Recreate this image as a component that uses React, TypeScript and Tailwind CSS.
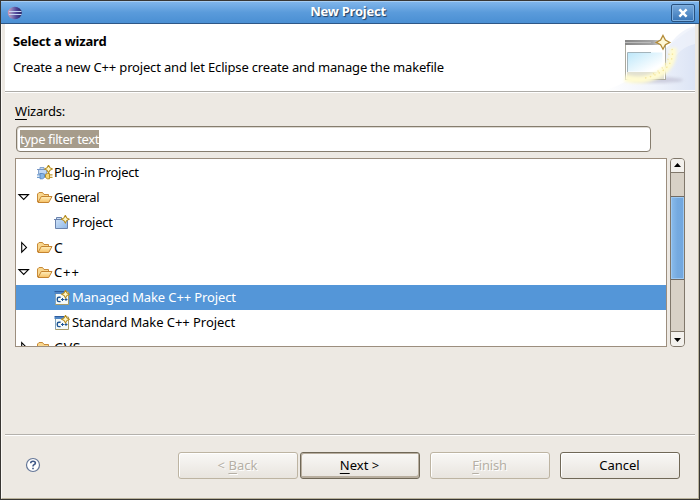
import React from 'react';

const Star = ({ x, y, s = 1 }: { x: number; y: number; s?: number }) => (
  <g transform={`translate(${x} ${y}) scale(${s})`}>
    <path d="M0 -4.2 L1.5 -1.5 L4.2 0 L1.5 1.5 L0 4.2 L-1.5 1.5 L-4.2 0 L-1.5 -1.5Z" fill="#fff6c4" stroke="#b58a1c" strokeWidth="1.1" />
  </g>
);

const Folder = () => (
  <svg width="16" height="16" viewBox="0 0 16 16" className="shrink-0">
    <defs>
      <linearGradient id="fo" x1="0" y1="0" x2="0" y2="1">
        <stop offset="0" stopColor="#fff0c0" />
        <stop offset="1" stopColor="#f5bf62" />
      </linearGradient>
    </defs>
    <path d="M0.5 12 V4 L2 2.5 H5.5 L7 4.5 H11.5 V7" fill="#f9d78e" stroke="#c88a38" />
    <path d="M1 12.5 L4.3 6.5 H15 L11.7 12.5Z" fill="url(#fo)" stroke="#c58430" strokeLinejoin="round" />
  </svg>
);

const ProjectIcon = () => (
  <svg width="16" height="16" viewBox="0 0 16 16" className="shrink-0">
    <defs>
      <linearGradient id="pr" x1="0" y1="0" x2="1" y2="1">
        <stop offset="0" stopColor="#d4e5f8" />
        <stop offset="1" stopColor="#8db6e6" />
      </linearGradient>
    </defs>
    <path d="M1.5 13.5 V4.5 H2.5 V2.5 H7.5 V4.5 H13.5 V13.5Z" fill="url(#pr)" stroke="#6b83ad" />
    <path d="M0 4.5 H9" stroke="#6b83ad" />
    <Star x={11.3} y={4.2} s={0.92} />
  </svg>
);

const CppIcon = () => (
  <svg width="16" height="16" viewBox="0 0 16 16" className="shrink-0">
    <path d="M1.5 2 H14.5 V14.5 H1.5Z" fill="#f5faf9" stroke="#a69b69" />
    <path d="M0.5 2 H10 V4 H0.5Z" fill="#4f86c5" />
    <path d="M0.5 1.5 H10" stroke="#2f5e9f" />
    <path d="M1.5 4.5 V14" stroke="#81a3bd" />
    <path d="M6.6 7.2 H4.9 Q3.3 7.2 3.3 8.7 V10 Q3.3 11.6 4.9 11.6 H6.6" fill="none" stroke="#1f5695" strokeWidth="1.4" />
    <path d="M7 9.5 H10 M8.5 8 V11 M10.5 9.5 H13.5 M12 8 V11" stroke="#1f5695" strokeWidth="1" />
    <Star x={11.5} y={4.2} s={0.92} />
  </svg>
);

const PluginIcon = () => (
  <svg width="16" height="16" viewBox="0 0 16 16" className="shrink-0">
    <path d="M1.5 9 V4.5 H3 V2.5 H7 V4.5 H9.5 V9Z" fill="#c0d8f3" stroke="#86a4cd" />
    <path d="M0 4.5 H8" stroke="#7595c5" />
    <path d="M3 8.5 H5.5 L7.5 9.5 V12.5 L5.5 13.8 H3Z" fill="#85b6e7" stroke="#5685bd" strokeWidth=".9" />
    <path d="M0 9.8 H3 M0 12.3 H3" stroke="#6f9dd0" strokeWidth="1.2" />
    <path d="M8.5 9.5 L10.5 8.5 H12.5 V13.8 H10.5 L8.5 12.5Z" fill="#f6d774" stroke="#b18d25" />
    <path d="M12.5 9.8 H15.5 M12.5 12.3 H15.5" stroke="#c39c34" strokeWidth="1.2" />
    <Star x={11.5} y={4} s={0.92} />
  </svg>
);

const Arrow = ({ open }: { open: boolean }) => (
  <svg width="13" height="13" viewBox="0 0 13 13" className="shrink-0">
    {open ? (
      <path d="M1.9 3.6 H11.5 L6.7 8.4Z" fill="#fff" stroke="#000" strokeWidth="1.1" />
    ) : (
      <path d="M4.7 1.6 L9.5 6.4 L4.7 11.2Z" fill="#fff" stroke="#000" strokeWidth="1.1" />
    )}
  </svg>
);

const Row = ({ icon, children, arrow, deep, selected, text }: {
  icon: React.ReactNode; children: React.ReactNode; arrow?: 'open' | 'closed'; deep?: boolean; selected?: boolean; text?: string;
}) => (
  <div className={`flex h-[25px] shrink-0 items-center ${deep ? 'pl-[38px]' : 'pl-px'} ${selected ? 'bg-[#5496d8] text-white' : ''}`}>
    {!deep && <div className="flex w-5 shrink-0">{arrow && <Arrow open={arrow === 'open'} />}</div>}
    {icon}
    <span className={`whitespace-nowrap ${deep ? 'ml-[2px]' : 'ml-px'} ${text ?? ''}`}>{children}</span>
  </div>
);

const Key = ({ children }: { children: React.ReactNode }) => (
  <span className="underline decoration-1 underline-offset-[3px]">{children}</span>
);

const Button = ({ children, disabled, primary, className = '' }: {
  children: React.ReactNode; disabled?: boolean; primary?: boolean; className?: string;
}) => (
  <button
    className={`h-[27px] w-[120px] rounded-[3px] border bg-linear-to-b from-[#f9f8f6] to-[#e8e4de] pr-px text-center leading-[25px] ${
      disabled ? 'border-[#bdb4a2] text-[#b5afa5] [text-shadow:1px_1px_0_#fff]' : 'border-[#706857] text-black'
    } ${primary ? 'shadow-[inset_1px_1px_0_#b8ae9f,inset_-1px_-2px_0_#b8ae9f]' : 'shadow-[inset_1px_1px_0_#ffffff]'} ${className}`}
  >
    {children}
  </button>
);

const WizardBanner = () => (
  <svg width="110" height="66" viewBox="0 0 110 66" className="shrink-0">
    <defs>
      <linearGradient id="sw" x1="0" y1="0" x2="1" y2="0">
        <stop offset="0" stopColor="#ffffff" />
        <stop offset=".55" stopColor="#eff3fb" />
        <stop offset="1" stopColor="#dce4f5" />
      </linearGradient>
      <linearGradient id="sk" x1="0" y1="0" x2="1" y2="1">
        <stop offset="0" stopColor="#bce7fa" />
        <stop offset=".8" stopColor="#fff" />
      </linearGradient>
      <linearGradient id="tb" x1="0" y1="0" x2="1" y2="0">
        <stop offset="0" stopColor="#858585" />
        <stop offset=".7" stopColor="#a5a5a5" />
        <stop offset="1" stopColor="#e5e5e5" />
      </linearGradient>
      <filter id="soft" x="-30%" y="-30%" width="160%" height="160%"><feGaussianBlur stdDeviation="1.8" /></filter>
    </defs>
    <path d="M20 66 C60 55 75 22 110 3 V66Z" fill="url(#sw)" />
    <path d="M82 25 C90 12 98 5 110 2 V20 C100 22 93 28 86 38Z" fill="#edf1fa" opacity=".8" />
    <ellipse cx="72" cy="56" rx="26" ry="3" fill="#b9b8cc" opacity=".6" filter="url(#soft)" />
    <rect x="40.5" y="16.5" width="40" height="39" fill="#fff" stroke="#aaa99e" />
    <rect x="40" y="16" width="39" height="5" fill="url(#tb)" />
    <path d="M40 18.5 H66" stroke="#bbb" />
    <rect x="42.5" y="28.5" width="35" height="19" fill="url(#sk)" />
    <path d="M42.5 48 V28.5 H66" fill="none" stroke="#a3b4bb" />
    <rect x="42" y="48" width="37" height="7" fill="#e2e1d1" />
    <path d="M40 54 C62 60 90 49 88 24" fill="none" stroke="#fffbd2" strokeWidth="7" filter="url(#soft)" />
    <path d="M60 54 C78 50 90 40 87 25" fill="none" stroke="#f4e59c" strokeWidth="1.4" strokeDasharray="1.4 3.4" />
    <path d="M68 50 C78 45 84 38 84 29" fill="none" stroke="#f3e6a6" strokeWidth="1.4" strokeDasharray="1.2 4" />
    <path d="M78 11.5 L80.4 16 L84.8 18.4 L80.4 20.8 L78 25.2 L75.6 20.8 L71.2 18.4 L75.6 16Z" fill="#fff8d7" stroke="#b28a35" strokeWidth="1.3" />
  </svg>
);

export default function App() {
  return (
    <div className="flex h-[500px] w-[700px] flex-col overflow-hidden border border-[#383633] bg-[#ede9e3] font-['Noto_Sans',sans-serif] text-[13px] text-black">
      <div className="flex h-[23px] shrink-0 items-center border-t border-b border-t-[#a7cdf2] border-b-[#2e5786] bg-linear-to-b from-[#7fb5ea] via-[#5a9bdb] to-[#4a8fd3] pr-[4px] pl-[6px]">
        <svg width="16" height="16" viewBox="0 0 16 16">
          <defs>
            <linearGradient id="ec" x1="0" y1="0" x2="1" y2="0">
              <stop offset="0" stopColor="#d99bb5" />
              <stop offset=".28" stopColor="#8c80b7" />
              <stop offset=".6" stopColor="#50489a" />
              <stop offset="1" stopColor="#292566" />
            </linearGradient>
          </defs>
          <ellipse cx="7.8" cy="8" rx="7" ry="6.2" fill="url(#ec)" />
          <path d="M2 6.5 H14.5 M2 9.5 H14.5" stroke="#c5d5f1" strokeWidth="1.1" />
        </svg>
        <div className="flex-1 pr-[6px] pb-px pl-[8px] text-center font-bold tracking-[-0.25px] text-white [text-shadow:1px_1px_1px_#243e60]">New Project</div>
        <div className="flex h-[18px] w-[24px] items-center justify-center rounded-[2px] border border-[#28517f] bg-linear-to-b from-[#79abdd] to-[#3774b5] shadow-[inset_0_0_0_1px_#80b1e1]">
          <svg width="10" height="10" viewBox="0 0 10 10"><path d="M2.2 2.2 L7.8 7.8 M7.8 2.2 L2.2 7.8" stroke="#fff" strokeWidth="2.4" strokeLinecap="square" /></svg>
        </div>
      </div>

      <div className="flex flex-1 flex-col border-r border-b border-l border-r-[#b9b29b] border-b-[#b9b29b] border-l-[#faf8f5] px-[3px]">
        <div className="flex h-[67px] shrink-0 justify-between bg-white">
          <div className="pt-[8px] pl-[8px] whitespace-nowrap">
            <div className="leading-[18px] font-bold tracking-[-0.2px]">Select a wizard</div>
            <div className="mt-[8px] leading-[18px] tracking-[-0.17px]">Create a new C++ project and let Eclipse create and manage the makefile</div>
          </div>
          <WizardBanner />
        </div>
        <div className="h-[2px] shrink-0 border-t border-[#aeaca8] bg-white" />

        <div className="flex h-[341px] shrink-0 flex-col pt-[9px] pr-[9px] pl-[10px]">
          <div className="leading-[18px] tracking-[-0.2px]"><Key>W</Key>izards:</div>
          <div className="mt-[6px] ml-px flex h-[26px] w-[635px] shrink-0 items-center rounded-[4px] border border-[#867d6e] bg-white pl-[3px] shadow-[inset_1px_1px_0_#ddd9d2]">
            <span className="h-[18px] bg-[#a69c8b] leading-[19px] tracking-[-0.39px] whitespace-nowrap text-white">type filter text</span>
          </div>
          <div className="mt-[6px] flex h-[189px] shrink-0 gap-[3px]">
            <div className="flex w-[652px] flex-col overflow-hidden border border-[#9c8e7e] bg-white pt-px">
              <Row icon={<PluginIcon />} text="tracking-[-0.27px]">Plug-in Project</Row>
              <Row icon={<Folder />} arrow="open" text="tracking-[-0.4px]">General</Row>
              <Row icon={<ProjectIcon />} deep text="tracking-[-0.25px]">Project</Row>
              <Row icon={<Folder />} arrow="closed" text="text-[14px]">C</Row>
              <Row icon={<Folder />} arrow="open" text="tracking-[0.9px]">C++</Row>
              <Row icon={<CppIcon />} deep selected text="tracking-[-0.12px]">Managed Make C++ Project</Row>
              <Row icon={<CppIcon />} deep text="tracking-[-0.06px]">Standard Make C++ Project</Row>
              <Row icon={<Folder />} arrow="closed" text="text-[14px] tracking-[0.8px]">CVS</Row>
            </div>
            <div className="flex w-[15px] flex-col overflow-hidden rounded-[4px] border border-[#80776a] bg-[#d8d1c6]">
              <div className="flex h-[14px] shrink-0 items-center justify-center border-b border-[#80776a] bg-[#f3f1ed]">
                <svg width="7" height="5" viewBox="0 0 7 5"><path d="M3.5 0 L7 4 H0Z" fill="#000" /></svg>
              </div>
              <div className="h-[23px] shrink-0" />
              <div className="h-[84px] shrink-0 border-y border-[#716b64] bg-linear-to-r from-[#8bbceb] via-[#75aae0] to-[#72a7de] shadow-[inset_0_0_0_1px_#9dc9f3]" />
              <div className="flex-1" />
              <div className="flex h-[15px] shrink-0 items-center justify-center border-t border-[#80776a] bg-[#f3f1ed]">
                <svg width="7" height="5" viewBox="0 0 7 5"><path d="M0 1 H7 L3.5 5Z" fill="#000" /></svg>
              </div>
            </div>
          </div>
        </div>

        <div className="h-[2px] shrink-0 border-t border-[#b4b1ac] bg-white" />
        <div className="flex flex-1 items-start pt-[16px] pl-[20px]">
          <svg width="16" height="16" viewBox="0 0 16 16" className="mt-[5px]">
            <circle cx="8" cy="8" r="6.5" fill="#fff" stroke="#657798" strokeWidth="1.2" />
            <path d="M5.7 6.2 Q5.7 4.2 8 4.2 Q10.4 4.2 10.4 6 Q10.4 7.2 8.9 7.8 Q8 8.2 8 9.6 M8 10.8 V12.3" fill="none" stroke="#405988" strokeWidth="1.6" />
          </svg>
          <Button disabled className="ml-[137px]">&lt; <Key>B</Key>ack</Button>
          <Button primary className="ml-[2px]"><Key>N</Key>ext &gt;</Button>
          <Button disabled className="ml-[10px] tracking-[-0.2px]"><Key>F</Key>inish</Button>
          <Button className="ml-[10px]">Cancel</Button>
        </div>
      </div>
    </div>
  );
}
